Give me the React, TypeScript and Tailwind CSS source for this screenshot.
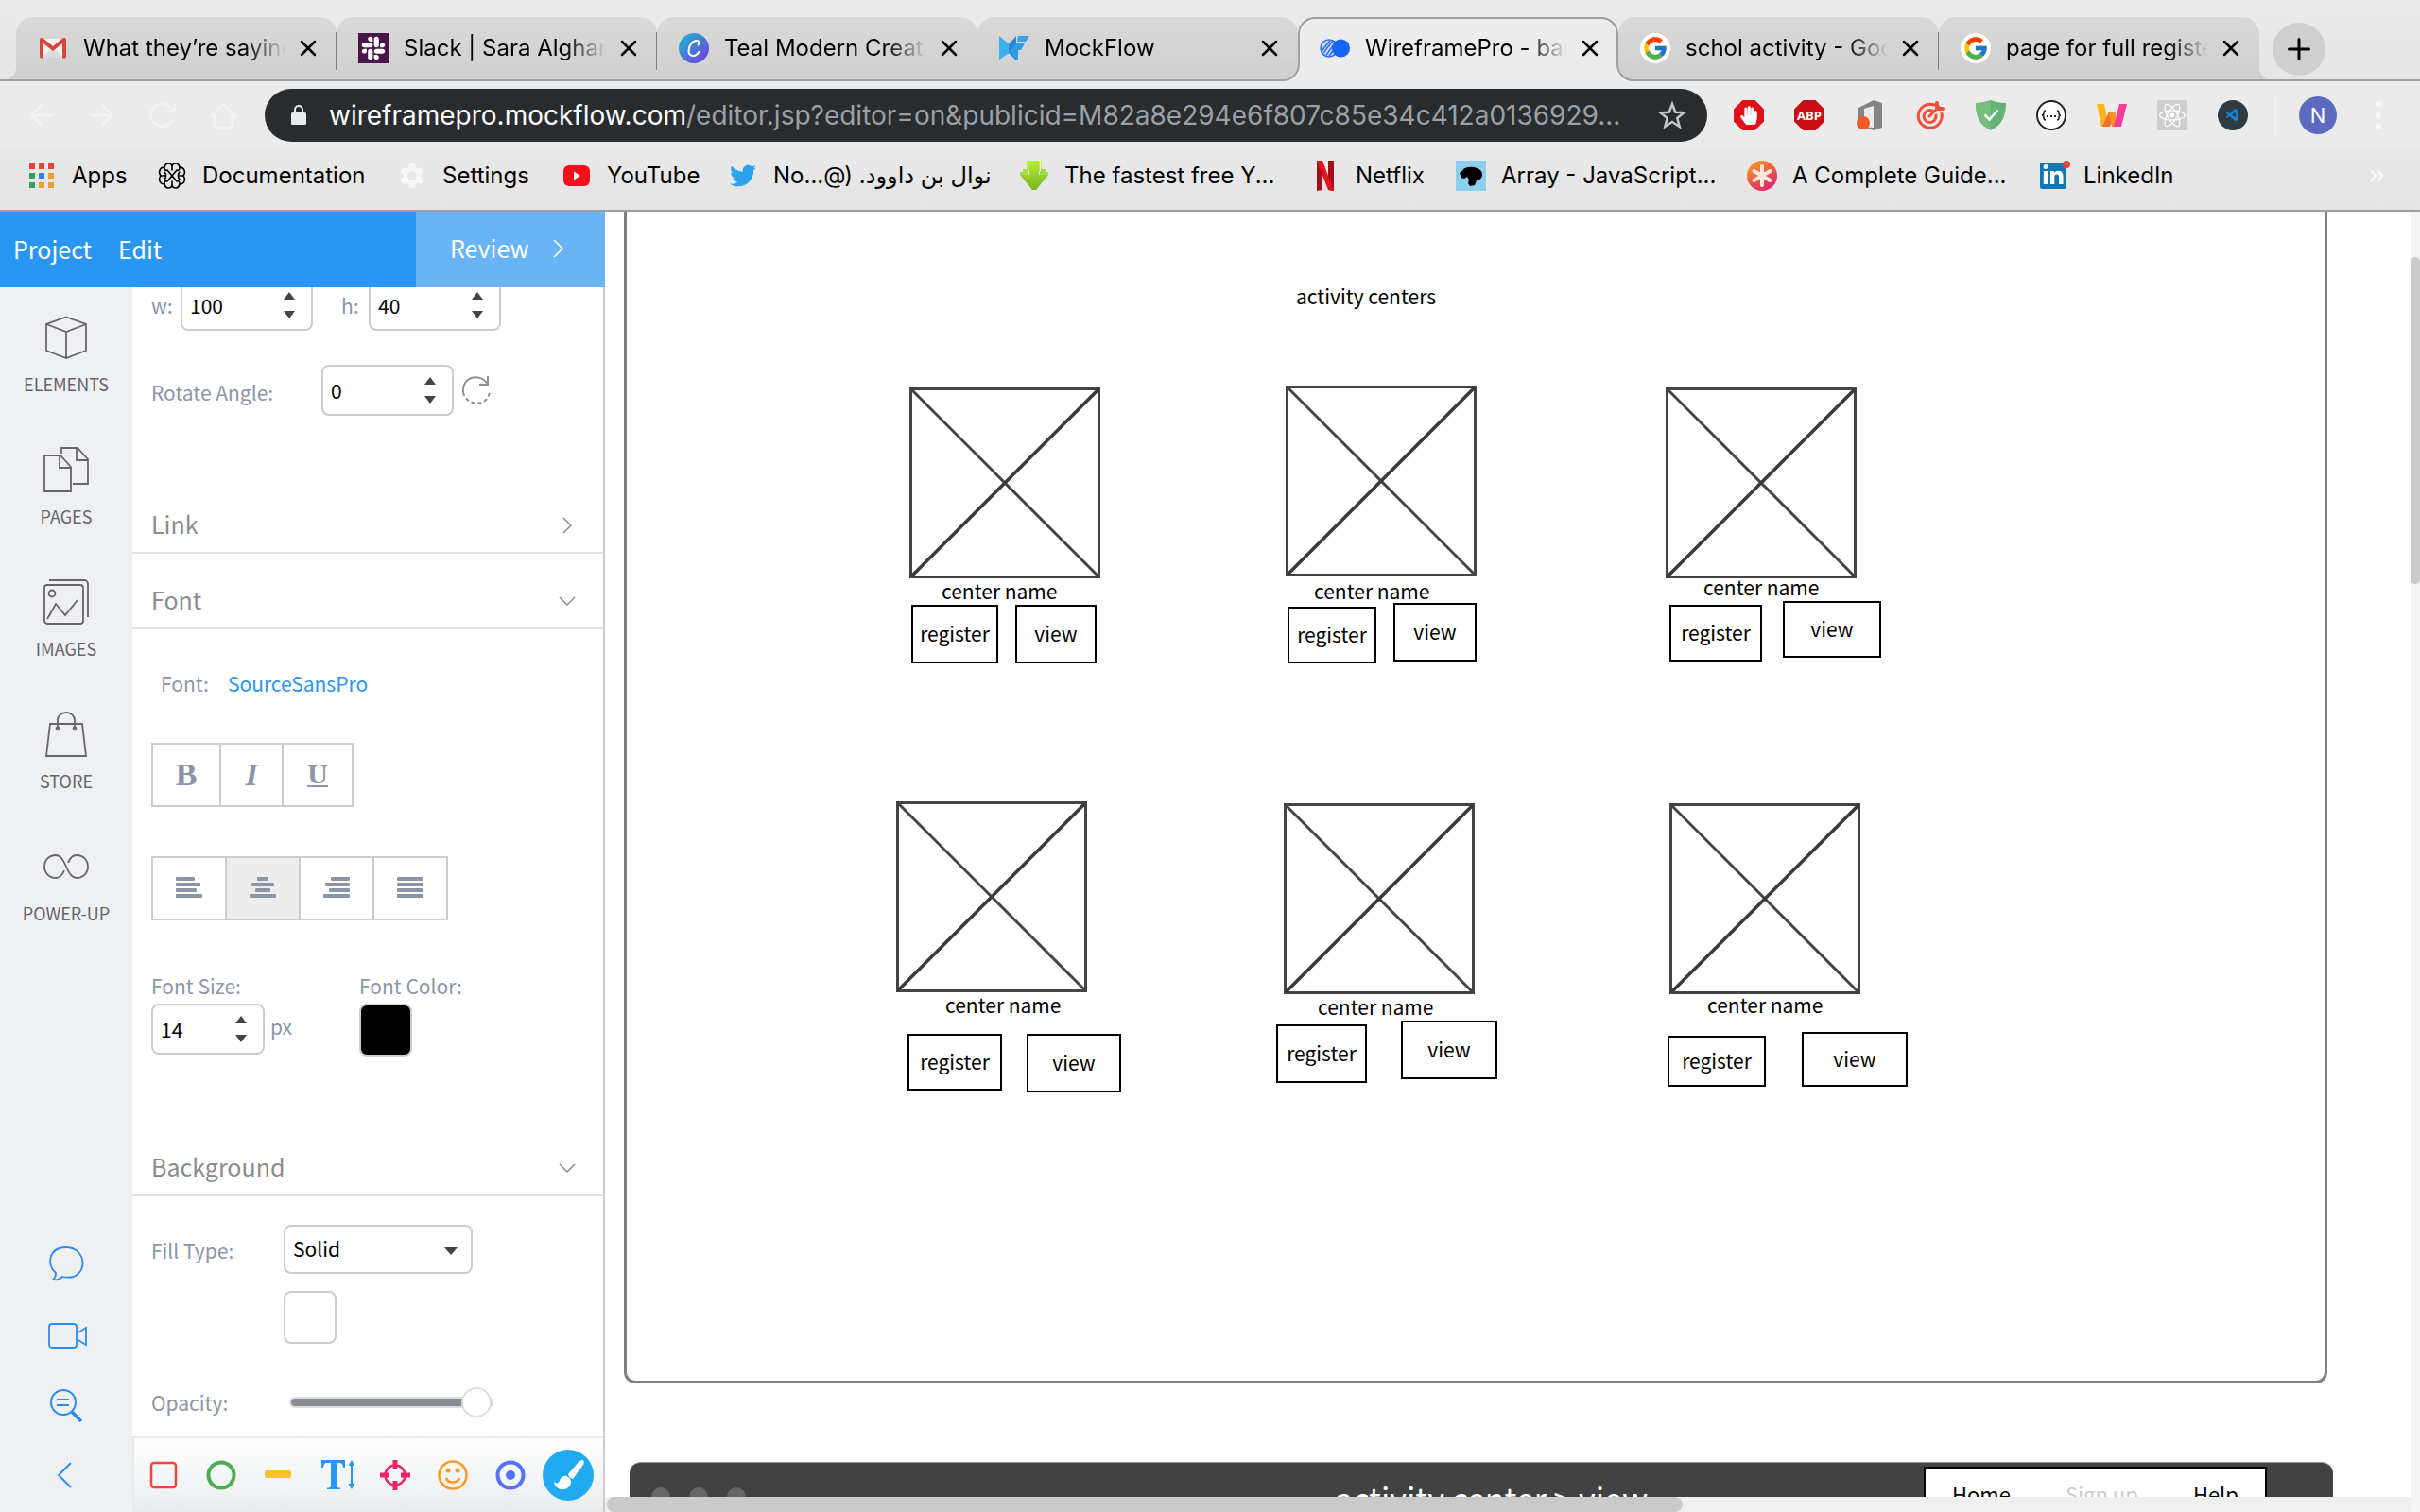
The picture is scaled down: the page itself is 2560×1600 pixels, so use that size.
import type { ReactNode } from "react";
import { FaSlack, FaTwitter, FaReact, FaHandPaper, FaLinkedinIn } from "react-icons/fa";
import { FcGoogle } from "react-icons/fc";
import { VscVscode } from "react-icons/vsc";
import { MdSettings } from "react-icons/md";

/* ---------- browser icons ---------- */

const Gmail = () => (
  <svg viewBox="0 0 32 32" className="size-8">
    <path d="M4 6h24v20H4z" fill="#f2f2f2" />
    <path d="M4 26 16 15l12 11z" fill="#dcdcdc" />
    <path d="M2 7v18a1.500 1.500 0 0 0 1.500 1.500H6V11l10 8 10-8v15.500h2.500A1.500 1.500 0 0 0 30 25V7c0-2-2.500-2.500-4-1.200L16 14 6 5.800C4.500 4.500 2 5 2 7z" fill="#d9453a" />
  </svg>
);

const SlackTile = () => (
  <span className="flex size-8 items-center justify-center bg-[#4a154b] text-white">
    <FaSlack className="size-7" />
  </span>
);

const Canva = () => (
  <svg viewBox="0 0 32 32" className="size-8">
    <defs>
      <linearGradient id="canva" x1="0.1" y1="0.1" x2="0.9" y2="0.9">
        <stop offset="0" stopColor="#1fb1d0" />
        <stop offset="1" stopColor="#7440e0" />
      </linearGradient>
    </defs>
    <circle cx="16" cy="16" r="16" fill="url(#canva)" />
    <path d="M20.500 12.500c1.500-1.500 1.300-4.500-1.500-4.500-4.500 0-8.500 5.500-8.500 10.500 0 3.500 2 5.500 4.700 5.500 2.800 0 4.800-1.600 6-4" fill="none" stroke="#fff" strokeWidth="2" strokeLinecap="round" />
  </svg>
);

const MockFlow = () => (
  <svg viewBox="0 0 32 32" className="size-8">
    <path d="M0 3 11 12v9L0 28z" fill="#3eb0ea" />
    <path d="M10 12 18 3v26l-8-8z" fill="#2688d8" />
    <path d="M20 3h12l-4 6h-9z" fill="#3ba3e8" />
    <path d="M18 11h9l-4 7h-3v11L10 20z" fill="#2f9be6" />
  </svg>
);

const WireframePro = () => (
  <svg viewBox="0 0 32 32" className="size-8">
    <circle cx="10" cy="16" r="9" fill="#c9dafb" stroke="#2f6bf5" strokeWidth="1.500" />
    <path d="M3 18 11 8M4 21 14 8M7 23 16 11M10 24l7-9" stroke="#2f6bf5" strokeWidth="1.500" />
    <circle cx="22.500" cy="16" r="9.500" fill="#1763fb" />
  </svg>
);

const Google = () => (
  <span className="flex size-8 items-center justify-center rounded-full bg-white">
    <FcGoogle className="size-7" />
  </span>
);

const AppsGrid = () => (
  <svg viewBox="0 0 32 32" className="size-8">
    {["#ee4135", "#ee4135", "#ee4135", "#3b9c5b", "#2f85ec", "#eba12b", "#3b9c5b", "#eba12b", "#eba12b"].map((c, i) => (
      <rect key={i} x={3 + (i % 3) * 10} y={3 + Math.floor(i / 3) * 10} width="6" height="6" fill={c} />
    ))}
  </svg>
);

const Knot = () => (
  <svg viewBox="0 0 32 32" className="size-8" fill="none" stroke="#000" strokeWidth="1.600" strokeLinecap="round">
    <path d="M16 5c-2-3-7-3-8 2-5 0-7 5-4 9-3 4-1 9 4 9 1 5 6 5 8 2 2 3 7 3 8-2 5 0 7-5 4-9 3-4 1-9-4-9-1-5-6-5-8-2z" />
    <path d="M11 10l10 12M21 10 11 22M16 5v5M16 22v5M4 16h4M28 16h-4M8 7c0 3 1 4 3 3M24 7c0 3-1 4-3 3M8 25c0-3 1-4 3-3M24 25c0-3-1-4-3-3M8 12c2 2 2 6 0 8M24 12c-2 2-2 6 0 8" />
  </svg>
);

const YouTube = () => (
  <svg viewBox="0 0 32 32" className="size-8">
    <rect x="2" y="5" width="28" height="22" rx="6" fill="#fb0d1b" />
    <path d="M13 11.500v9l7-4.500z" fill="#fff" />
  </svg>
);

const Download = () => (
  <svg viewBox="0 0 32 32" className="size-8">
    <defs>
      <linearGradient id="dl" x1="0" y1="0" x2="0" y2="1">
        <stop offset="0" stopColor="#b7ee35" />
        <stop offset="1" stopColor="#76b522" />
      </linearGradient>
    </defs>
    <path d="M8 0h16v11h-3v4h10L18 31h-4L1 15h10v-4H8z" fill="url(#dl)" />
    <path d="M1 15v-3h3V9h6v6zM31 15v-3h-3V9h-6v6z" fill="#a3dc4a" />
    <path d="M9.500 0v11M22.500 0v11" stroke="#effad2" strokeWidth="1.500" />
  </svg>
);

const Netflix = () => (
  <svg viewBox="0 0 32 32" className="size-8">
    <path d="M7 0h6v31l-6 1zM19 0h6v32l-6-1z" fill="#a50f17" />
    <path d="M7 0h6l12 32-6-1z" fill="#e5121d" />
  </svg>
);

const Bust = () => (
  <svg viewBox="0 0 32 32" className="size-8">
    <path d="M0 0h32v32H0z" fill="#8dcff0" />
    <path d="M4 14c0-2 2-3 3-3 1-3 4-4 7-4 5-1 9 1 12 3 3 3 3 8-1 10l-3 1-2 5-5 1-2-3 1-4-2-3-3 2-4-1 1-2z" fill="#000" />
  </svg>
);

const Asterisk = () => (
  <svg viewBox="0 0 32 32" className="size-8">
    <defs>
      <linearGradient id="ast" x1="0.2" y1="0" x2="0.8" y2="1">
        <stop offset="0" stopColor="#f89a22" />
        <stop offset="1" stopColor="#dd1c75" />
      </linearGradient>
    </defs>
    <circle cx="16" cy="16" r="16" fill="url(#ast)" />
    <path d="M16 6v20M7.500 11l17 10M24.500 11l-17 10" stroke="#fde6dc" strokeWidth="4" strokeLinecap="round" />
  </svg>
);

const LinkedIn = () => (
  <span className="relative flex size-8 items-center justify-center">
    <span className="flex size-7 items-center justify-center rounded-xs bg-[#1277b5] text-white">
      <FaLinkedinIn className="size-6" />
    </span>
    <span className="absolute -right-0.5 top-0 size-2 rounded-full bg-[#e0443e]" />
  </span>
);

const OCT = "M9.500 0h13L32 9.500v13L22.500 32h-13L0 22.500v-13z";

const StopHand = () => (
  <span className="relative flex size-8 items-center justify-center text-white">
    <svg viewBox="0 0 32 32" className="absolute size-8">
      <path d={OCT} fill="#df1119" />
    </svg>
    <FaHandPaper className="relative size-5" />
  </span>
);

const Abp = () => (
  <svg viewBox="0 0 32 32" className="size-8">
    <path d={OCT} fill="#c90d14" />
    <text x="16" y="21" textAnchor="middle" fill="#fff" fontSize="13" fontWeight="700" fontFamily="Open Sans, sans-serif">ABP</text>
  </svg>
);

const Office = () => (
  <svg viewBox="0 0 32 32" className="size-8">
    <path d="M4 8 20 0l9 3v26l-9 3-12-4 12 1V6L10 9v10l-6 3z" fill="#848484" />
    <circle cx="9" cy="24" r="7" fill="#f15a22" />
  </svg>
);

const Target = () => (
  <svg viewBox="0 0 32 32" className="size-8" fill="none" stroke="#f2503b" strokeWidth="3" strokeLinecap="round">
    <path d="M20 5a12.500 12.500 0 1 0 8 9" />
    <path d="M18 11a6.500 6.500 0 1 0 4 5" />
    <path d="M15 17 25 7" />
    <path d="M23 3v6h6" strokeWidth="4" />
  </svg>
);

const Shield = () => (
  <svg viewBox="0 0 32 32" className="size-8">
    <path d="M16 0c5 2 10 3 16 3 0 14-4 23-16 29C4 26 0 17 0 3c6 0 11-1 16-3z" fill="#67b279" />
    <path d="M16 0v32C4 26 0 17 0 3c6 0 11-1 16-3z" fill="#74bd7a" />
    <path d="m9.500 15.500 5 5 9-10" fill="none" stroke="#fff" strokeWidth="2.500" />
  </svg>
);

const Json = () => (
  <svg viewBox="0 0 32 32" className="size-8">
    <circle cx="16" cy="16" r="15" fill="#fff" stroke="#222" strokeWidth="2" />
    <path d="M10 11c-2 0-2 1-2 2.500S8 16 6 16c2 0 2 1 2 2.500S8 21 10 21M22 11c2 0 2 1 2 2.500s0 2.500 2 2.500c-2 0-2 1-2 2.500s0 2.500-2 2.500" fill="none" stroke="#222" strokeWidth="1.500" />
    <path d="M11 16h2v2h-2zM15 16h2v2h-2zM19 16h2v2h-2z" fill="#222" />
  </svg>
);

const Wappalyzer = () => (
  <svg viewBox="0 0 32 32" className="size-8">
    <path d="M0 4h8l5 24H5z" fill="#fcb61a" />
    <path d="M13 12h7l-6 16H6z" fill="#f7702e" />
    <path d="M12 12h7l4 16h-7z" fill="#f99220" />
    <path d="M24 4h8l-6 24h-8z" fill="#f93b9b" />
  </svg>
);

const ReactTile = () => (
  <span className="flex size-8 items-center justify-center rounded-xs bg-[#cecece] text-white">
    <FaReact className="size-7" />
  </span>
);

const Code = () => (
  <span className="flex size-8 items-center justify-center rounded-full bg-[#2f3b43] text-[#1583cf]">
    <VscVscode className="size-4" />
  </span>
);

/* ---------- browser chrome ---------- */

const TABS: { icon: ReactNode; title: string; active?: boolean; sep?: boolean }[] = [
  { icon: <Gmail />, title: "What they’re saying", sep: true },
  { icon: <SlackTile />, title: "Slack | Sara Algham", sep: true },
  { icon: <Canva />, title: "Teal Modern Creativ", sep: true },
  { icon: <MockFlow />, title: "MockFlow" },
  { icon: <WireframePro />, title: "WireframePro - bar", active: true },
  { icon: <Google />, title: "schol activity - Goog", sep: true },
  { icon: <Google />, title: "page for full registe" },
];

function CloseIcon() {
  return (
    <svg viewBox="0 0 20 20" className="size-5" stroke="#000" strokeWidth="2.500" strokeLinecap="round">
      <path d="M3 3l14 14M17 3 3 17" />
    </svg>
  );
}

function TabStrip() {
  return (
    <div className="flex h-[86px] items-end bg-linear-to-b from-[#ebebeb] to-[#e5e5e5] pl-[17px] shadow-[inset_0_-2px_0_#9f9f9f]">
      {TABS.map((t, i) => (
        <div
          key={t.title}
          className={
            t.active
              ? "relative z-10 flex h-[68px] w-[339px] items-center rounded-t-[18px] border-2 border-b-0 border-[#9f9f9f] bg-[#ececec] pb-1 pl-[21px]"
              : "relative mb-0.5 flex h-[66px] w-[339px] items-center rounded-t-[18px] bg-linear-to-b from-[#d9d9d9] to-[#cfcfcf] pl-[23px]"
          }
        >
          {i === 0 && (
            <span className="absolute bottom-0 -left-3 size-3 bg-[#cfcfcf]">
              <span className="block size-full rounded-br-xl bg-[#e6e6e6]" />
            </span>
          )}
          {i === TABS.length - 1 && (
            <span className="absolute -right-3 bottom-0 size-3 bg-[#cfcfcf]">
              <span className="block size-full rounded-bl-xl bg-[#e6e6e6]" />
            </span>
          )}
          {t.active && (
            <>
              <span className="absolute -left-5 bottom-0 size-5 bg-[#ececec]">
                <span className="block size-full rounded-br-[18px] border-r-2 border-b-2 border-[#9f9f9f] bg-[#d0d0d0]" />
              </span>
              <span className="absolute -right-5 bottom-0 size-5 bg-[#ececec]">
                <span className="block size-full rounded-bl-[18px] border-b-2 border-l-2 border-[#9f9f9f] bg-[#d0d0d0]" />
              </span>
            </>
          )}
          {t.icon}
          <span className="ml-4 w-[214px] overflow-hidden text-[24px] leading-8 whitespace-nowrap text-black [mask-image:linear-gradient(to_right,#000_170px,transparent)]">
            {t.title}
          </span>
          <button aria-label={`Close ${t.title}`} className="ml-3.5">
            <CloseIcon />
          </button>
          {t.sep && <span className="absolute top-4 -right-px h-10 w-0.5 bg-[#808080]" />}
        </div>
      ))}
      <button aria-label="New tab" className="mb-1.5 ml-3.5 flex size-14 items-center justify-center rounded-full bg-[#cfcfcf]">
        <svg viewBox="0 0 24 24" className="size-6" stroke="#000" strokeWidth="3" strokeLinecap="round">
          <path d="M12 1.500v21M1.500 12h21" />
        </svg>
      </button>
    </div>
  );
}

const NAV: [string, string][] = [
  ["Back", "M28 16H5M16 5 5 16l11 11"],
  ["Forward", "M4 16h23M16 5l11 11-11 11"],
  ["Reload", "M27 20a12 12 0 1 1-2-12l3 3M29 3v9h-9"],
  ["Home", "M3 17 16 4l13 13h-4v12H7V17z"],
];

const EXTENSIONS: [string, ReactNode][] = [
  ["AdBlock", <StopHand />],
  ["Adblock Plus", <Abp />],
  ["Office", <Office />],
  ["Goals", <Target />],
  ["AdGuard", <Shield />],
  ["JSON viewer", <Json />],
  ["Colors", <Wappalyzer />],
  ["React tools", <ReactTile />],
  ["Code", <Code />],
];

function Toolbar() {
  return (
    <div className="flex h-[72px] items-center bg-[#ebebeb] pl-7">
      <div className="flex gap-8">
        {NAV.map(([name, d]) => (
          <button key={name} aria-label={name}>
            <svg viewBox="0 0 32 32" className="size-8" fill="none" stroke="#f1f2f3" strokeWidth="2.500">
              <path d={d} />
            </svg>
          </button>
        ))}
      </div>
      <div className="ml-7 flex h-14 min-w-0 flex-1 items-center rounded-full bg-[#282c2f] pr-[21px] pl-[26px]">
        <svg viewBox="0 0 20 24" className="h-6 w-5">
          <rect x="2" y="9" width="16" height="13" rx="1.500" fill="#e8eaed" />
          <path d="M6 10V6a4 4 0 0 1 8 0v4" fill="none" stroke="#e8eaed" strokeWidth="2" />
        </svg>
        <div className="ml-[22px] min-w-0 flex-1 overflow-hidden text-[28px] leading-9 whitespace-nowrap text-[#9aa0a6]">
          <span className="text-white">wireframepro.mockflow.com</span>
          /editor.jsp?editor=on&amp;publicid=M82a8e294e6f807c85e34c412a0136929...
        </div>
        <button aria-label="Bookmark this page">
          <svg viewBox="0 0 32 32" className="size-8" fill="none" stroke="#c4c7ca" strokeWidth="2.500">
            <path d="m16 4 3.300 8.700 9.200.5-7.200 5.800 2.400 9L16 23l-7.700 5 2.400-9-7.200-5.800 9.200-.5z" />
          </svg>
        </button>
      </div>
      <div className="ml-7 flex gap-8">
        {EXTENSIONS.map(([name, icon]) => (
          <button key={name} aria-label={name}>
            {icon}
          </button>
        ))}
      </div>
      <span className="ml-7 h-12 w-0.5 bg-[#efefef]" />
      <button className="ml-6 size-10 rounded-full bg-[#5c6bc0] text-[22px] leading-10 text-white">N</button>
      <button aria-label="Menu" className="mr-10 ml-10 flex w-2 flex-col items-center gap-1.5">
        <span className="size-1.5 rounded-full bg-[#f6f7f8]" />
        <span className="size-1.5 rounded-full bg-[#f6f7f8]" />
        <span className="size-1.5 rounded-full bg-[#f6f7f8]" />
      </button>
    </div>
  );
}

const BOOKMARKS: { icon: ReactNode; label: string; w: string; rtl?: boolean }[] = [
  { icon: <AppsGrid />, label: "Apps", w: "w-[138px]" },
  { icon: <Knot />, label: "Documentation", w: "w-[254px]" },
  { icon: <MdSettings className="size-8 text-[#f6f7f8]" />, label: "Settings", w: "w-[174px]" },
  { icon: <YouTube />, label: "YouTube", w: "w-[176px]" },
  { icon: <FaTwitter className="size-8 px-0.5 text-[#2aa3ef]" />, label: "نوال بن داوود. (@...No", w: "w-[308px]", rtl: true },
  { icon: <Download />, label: "The fastest free Y...", w: "w-[308px]" },
  { icon: <Netflix />, label: "Netflix", w: "w-[154px]" },
  { icon: <Bust />, label: "Array - JavaScript...", w: "w-[308px]" },
  { icon: <Asterisk />, label: "A Complete Guide...", w: "w-[308px]" },
  { icon: <LinkedIn />, label: "LinkedIn", w: "w-[154px]" },
];

function Bookmarks() {
  return (
    <nav className="flex h-[66px] items-start border-b-2 border-[#9f9f9f] bg-linear-to-b from-[#e9e9e9] to-[#e4e4e4] pl-7">
      {BOOKMARKS.map((b) => (
        <a key={b.label} href="#" className={`flex h-14 shrink-0 items-center gap-4 ${b.w}`}>
          {b.icon}
          <span dir={b.rtl ? "rtl" : "ltr"} className="text-[24px] leading-8 whitespace-nowrap text-black">
            {b.label}
          </span>
        </a>
      ))}
      <button aria-label="More bookmarks" className="mr-[38px] ml-auto h-14">
        <svg viewBox="0 0 16 16" className="size-4" fill="none" stroke="#f8f9fa" strokeWidth="2">
          <path d="m2 2 5 6-5 6M9 2l5 6-5 6" />
        </svg>
      </button>
    </nav>
  );
}

/* ---------- editor side rail ---------- */

const RAIL: [string, ReactNode][] = [
  ["ELEMENTS", <path d="M24 2.500 45 10v28l-21 8L3 38V10zM3 10l21 8 21-8M24 18v28" />],
  ["PAGES", <path d="M1 9h17l11 12v26H1zM17 9v13h12M19 7V1h17l11 12v26H31M35 1v13h12" />],
  ["IMAGES", (
    <>
      <rect x="1" y="6" width="41" height="41" rx="3" />
      <path d="M6 1h37a4 4 0 0 1 4 4v35M4 42l9-16 10 12 13-16" />
      <circle cx="9" cy="15" r="3.500" />
    </>
  )],
  ["STORE", (
    <>
      <path d="M7 13h34l4 34H3zM15 18V9a9 8 0 0 1 18 0v9" />
      <circle cx="15" cy="18" r="1.500" />
      <circle cx="33" cy="18" r="1.500" />
    </>
  )],
  ["POWER-UP", <path d="M22 28c-2 5-5 8-9 8-7 0-12-5-12-12s5-12 12-12c11 0 11 24 22 24 7 0 12-5 12-12s-5-12-12-12c-4 0-7 3-9 8" />],
];

function Rail() {
  return (
    <nav className="flex w-[140px] shrink-0 flex-col bg-[#eff0f4]">
      {RAIL.map(([name, art]) => (
        <button key={name} className="flex h-[140px] flex-col items-center pt-[29px] text-[18px] leading-7 text-[#666]">
          <svg viewBox="0 0 48 48" className="size-12" fill="none" stroke="#666" strokeWidth="1.800">
            {art}
          </svg>
          <span className="mt-[11px]">{name}</span>
        </button>
      ))}
      <div className="mt-auto flex flex-col items-center gap-[34px] pb-[19px]">
        <button aria-label="Comments">
          <svg viewBox="0 3 40 40" className="size-10" fill="none" stroke="#2b8cf3" strokeWidth="1.800">
            <path d="M9 31C-1 23 1 4 20 4s24 24 8 31c-5 1-8 1-12 0-3 3-6 4-10 3 3-2 3-4 3-7z" />
          </svg>
        </button>
        <button aria-label="Video">
          <svg viewBox="0 0 40 40" className="size-10 overflow-visible" fill="none" stroke="#2b8cf3" strokeWidth="1.800">
            <rect x="2" y="8" width="29" height="25" rx="3" />
            <path d="m31 18 10-6v18l-10-6" />
          </svg>
        </button>
        <button aria-label="Search">
          <svg viewBox="0 0 40 40" className="size-10" fill="none" stroke="#2b8cf3" strokeWidth="2">
            <circle cx="17" cy="17" r="13" />
            <path d="M10 14h13M10 20h13" />
            <path d="m26 27 10 10" strokeWidth="3.500" />
          </svg>
        </button>
        <button aria-label="Collapse">
          <svg viewBox="0 0 40 40" className="size-10" fill="none" stroke="#2b8cf3" strokeWidth="2">
            <path d="M25 7 12 20l13 13" />
          </svg>
        </button>
      </div>
    </nav>
  );
}

/* ---------- property panel ---------- */

function NumberBox({ id, value, w }: { id: string; value: string; w: string }) {
  return (
    <div className={`flex h-[54px] items-center rounded-lg border-2 border-[#ccc] bg-white pl-2 ${w}`}>
      <input id={id} defaultValue={value} className="h-8 w-0 min-w-0 flex-1 text-[21px] leading-8 text-black outline-none" />
      <div className="mr-4 flex w-3.5 flex-col gap-3">
        <button aria-label="Increase">
          <svg viewBox="0 0 14 8" className="block h-2 w-3.5">
            <path d="M7 0l6 8H1z" fill="#444" />
          </svg>
        </button>
        <button aria-label="Decrease">
          <svg viewBox="0 0 14 8" className="block h-2 w-3.5">
            <path d="M7 8l6-8H1z" fill="#444" />
          </svg>
        </button>
      </div>
    </div>
  );
}

function SectionHead({ title, open, mt }: { title: string; open?: boolean; mt: string }) {
  return (
    <button className={`flex h-20 w-full items-center justify-between border-b-2 border-[#e2e2e2] pt-5 pr-[28px] pl-5 text-[25px] leading-9 text-[#8c8c8c] ${mt}`}>
      <span className="pb-0.5">{title}</span>
      <svg viewBox="0 0 20 20" className="mt-0.5 size-5" fill="none" stroke="#8c8c8c" strokeWidth="1.500">
        <path d={open ? "m2 6 8 8 8-8" : "m6 2 8 8-8 8"} />
      </svg>
    </button>
  );
}

const ALIGN: [string, [number, number][]][] = [
  ["Align left", [[0, 20], [0, 26], [0, 22], [0, 28]]],
  ["Align center", [[8, 12], [2, 24], [6, 16], [0, 28]]],
  ["Align right", [[8, 20], [2, 26], [6, 22], [0, 28]]],
  ["Justify", [[0, 28], [0, 28], [0, 28], [0, 28]]],
];

const TOOLS: [string, ReactNode][] = [
  ["Rectangle", <rect x="5" y="5" width="26" height="26" rx="3" fill="none" stroke="#f4433c" strokeWidth="2.500" />],
  ["Circle", <circle cx="18" cy="18" r="13.500" fill="none" stroke="#4caf50" strokeWidth="4" />],
  ["Line", <rect x="3" y="13" width="28" height="8" rx="2" fill="#fdbf2d" />],
  ["Text", (
    <>
      <path d="M2 2h25v8h-2c-.5-4-1.500-5-4-5h-3v24c0 2 1 2.500 4 2.500V33H8v-1.500c3 0 4-.5 4-2.500V5H8C5.500 5 4.500 6 4 10H2z" fill="#2b96f1" />
      <path d="M34 5v26" stroke="#2b96f1" strokeWidth="2" />
      <path d="M34 2l3.500 6h-7zM34 33l3.500-6h-7z" fill="#2b96f1" />
    </>
  )],
  ["Hotspot", (
    <>
      <circle cx="18" cy="18" r="10.500" fill="none" stroke="#ee2460" strokeWidth="2.500" />
      <path d="M18 2v10M18 24v10M2 18h10M24 18h10" stroke="#ee2460" strokeWidth="5" />
    </>
  )],
  ["Emoji", (
    <>
      <circle cx="18" cy="18" r="14.500" fill="none" stroke="#fb9a28" strokeWidth="2.500" />
      <circle cx="13" cy="13" r="2.500" fill="#fb9a28" />
      <circle cx="23" cy="13" r="2.500" fill="#fb9a28" />
      <path d="M11 21c2 6 12 6 14 0" fill="none" stroke="#fb9a28" strokeWidth="2.500" />
    </>
  )],
  ["Marker", (
    <>
      <circle cx="18" cy="18" r="13.500" fill="none" stroke="#5472fb" strokeWidth="4" />
      <circle cx="18" cy="18" r="5" fill="#5472fb" />
    </>
  )],
];

const LABEL = "text-[21px] leading-8 text-[#8c95a8]";

function PropertyPanel() {
  return (
    <section className="flex min-w-0 flex-1 flex-col border-r-2 border-[#ccc] bg-white">
      <div className="min-h-0 flex-1 overflow-hidden">
        <div className="-mt-2 flex items-center pl-5">
          <label htmlFor="w" className={`w-[31px] ${LABEL}`}>w:</label>
          <NumberBox id="w" value="100" w="w-[140px]" />
          <label htmlFor="h" className={`ml-[30px] w-[29px] ${LABEL}`}>h:</label>
          <NumberBox id="h" value="40" w="w-[140px]" />
        </div>
        <div className="mt-9 flex items-center pl-5">
          <label htmlFor="angle" className={`w-[180px] pt-1 ${LABEL}`}>Rotate Angle:</label>
          <NumberBox id="angle" value="0" w="w-[140px]" />
          <button aria-label="Rotate" className="ml-2">
            <svg viewBox="0 0 32 32" className="size-8" fill="none" stroke="#8f8f8f" strokeWidth="2">
              <path d="M2 18C0 2 20-4 28 10M28 1v9h-9" />
              <path d="M2 18c3 16 28 16 28-2" strokeDasharray="4 3" />
            </svg>
          </button>
        </div>
        <SectionHead title="Link" mt="mt-[66px]" />
        <SectionHead title="Font" open mt="mt-0" />
        <div className="mt-[41px] flex gap-5 pl-[30px]">
          <span className={LABEL}>Font:</span>
          <a href="#" className="text-[21px] leading-8 text-[#2b96f1]">SourceSansPro</a>
        </div>
        <div className="mt-[47px] ml-5 flex h-[68px] w-[214px] divide-x-2 divide-[#ccc] border-2 border-[#ccc] text-[#8c95a8] [font-family:'Liberation_Serif',serif]">
          <button aria-label="Bold" className="w-[72px] text-[34px] leading-9 font-bold">B</button>
          <button aria-label="Italic" className="w-[66px] text-[34px] leading-9 font-bold italic">I</button>
          <button aria-label="Underline" className="flex flex-1 items-center justify-center">
            <span className="border-b-2 border-[#8c95a8] text-[30px] leading-6 font-bold">U</span>
          </button>
        </div>
        <div className="mt-[52px] ml-5 flex h-[68px] w-[314px] divide-x-2 divide-[#ccc] border-2 border-[#ccc]">
          {ALIGN.map(([name, rows], i) => (
            <button key={name} aria-label={name} className={`flex flex-1 items-center justify-center ${i === 1 ? "bg-[#ededed]" : ""}`}>
              <svg viewBox="0 0 28 24" className="h-6 w-7">
                {rows.map(([x, w], r) => (
                  <rect key={r} x={x} y={r * 6} width={w} height="4" rx="1" fill="#8c95a8" />
                ))}
              </svg>
            </button>
          ))}
        </div>
        <div className="mt-[53px] flex pl-5">
          <div className="w-[220px]">
            <label htmlFor="size" className={`block ${LABEL}`}>Font Size:</label>
            <div className="mt-[3px] flex items-center gap-1.5">
              <NumberBox id="size" value="14" w="w-[120px]" />
              <span className={`pb-1.5 ${LABEL}`}>px</span>
            </div>
          </div>
          <div>
            <span className={`block ${LABEL}`}>Font Color:</span>
            <button aria-label="Font color" className="mt-[3px] block size-14 rounded-lg border-2 border-[#ccc] bg-black" />
          </div>
        </div>
        <SectionHead title="Background" open mt="mt-[68px]" />
        <div className="mt-[30px] flex items-center pl-5">
          <label htmlFor="fill" className={`w-[140px] pt-0.5 ${LABEL}`}>Fill Type:</label>
          <div className="relative">
            <select id="fill" className="h-[52px] w-[200px] appearance-none rounded-lg border-2 border-[#ccc] bg-white pb-0.5 pl-2 text-[21px] leading-8 text-black">
              <option>Solid</option>
            </select>
            <svg viewBox="0 0 14 8" className="pointer-events-none absolute top-6 right-4 h-2 w-3.5">
              <path d="M7 8l7-8H0z" fill="#444" />
            </svg>
          </div>
        </div>
        <button aria-label="Fill color" className="mt-[18px] ml-[160px] block size-14 rounded-lg border-2 border-[#ccc] bg-white" />
        <div className="mt-[46px] flex items-center pl-5">
          <label htmlFor="opacity" className={`w-[146px] ${LABEL}`}>Opacity:</label>
          <input
            id="opacity"
            type="range"
            defaultValue={100}
            className="h-8 w-[216px] appearance-none bg-transparent [&::-webkit-slider-runnable-track]:h-3 [&::-webkit-slider-runnable-track]:rounded-full [&::-webkit-slider-runnable-track]:border-2 [&::-webkit-slider-runnable-track]:border-[#ddd] [&::-webkit-slider-runnable-track]:bg-[#888b94] [&::-webkit-slider-thumb]:-mt-3 [&::-webkit-slider-thumb]:size-8 [&::-webkit-slider-thumb]:appearance-none [&::-webkit-slider-thumb]:rounded-full [&::-webkit-slider-thumb]:border-2 [&::-webkit-slider-thumb]:border-[#ddd] [&::-webkit-slider-thumb]:bg-white"
          />
        </div>
      </div>
      <div className="grid h-20 shrink-0 grid-cols-8 items-center border-t-2 border-l-2 border-[#e8eaec] bg-linear-to-b from-white to-[#e9ecee] pr-1.5">
        {TOOLS.map(([name, art]) => (
          <button key={name} aria-label={name} className="flex justify-center">
            <svg viewBox="0 0 36 36" className="size-9 overflow-visible">{art}</svg>
          </button>
        ))}
        <button aria-label="Style" className="flex size-[54px] items-center justify-center justify-self-center rounded-full bg-[#20aaf1]">
          <svg viewBox="0 0 36 36" className="size-9" fill="#fff">
            <path d="M33 2c2 0 2 3 1 5L23 22c-2 0-5-3-5-5L29 4c1-1 3-2 4-2z" />
            <path d="M16 19c3 1 5 3 5 6 0 6-6 9-11 8-4-1-7-5-7-8 2 2 5 2 6-1 1-4 4-6 7-5z" />
          </svg>
        </button>
      </div>
    </section>
  );
}

/* ---------- wireframe canvas ---------- */

const IMAGES = [
  "left-[322px] top-[186px]",
  "left-[720px] top-[184px]",
  "left-[1122px] top-[186px]",
  "left-[308px] top-[624px]",
  "left-[718px] top-[626px]",
  "left-[1126px] top-[626px]",
];

const NAMES = [
  "left-[356px] top-[385px]",
  "left-[750px] top-[385px]",
  "left-[1162px] top-[381px]",
  "left-[360px] top-[823px]",
  "left-[754px] top-[825px]",
  "left-[1166px] top-[823px]",
];

const BUTTONS: [string, string][] = [
  ["register", "left-[324px] top-[416px] w-[92px] h-[62px]"],
  ["view", "left-[434px] top-[416px] w-[86px] h-[62px]"],
  ["register", "left-[722px] top-[418px] w-[94px] h-[60px]"],
  ["view", "left-[834px] top-[414px] w-[88px] h-[62px]"],
  ["register", "left-[1126px] top-[416px] w-[98px] h-[60px]"],
  ["view", "left-[1246px] top-[412px] w-[104px] h-[60px]"],
  ["register", "left-[320px] top-[870px] w-[100px] h-[60px]"],
  ["view", "left-[446px] top-[870px] w-[100px] h-[62px]"],
  ["register", "left-[710px] top-[860px] w-[96px] h-[62px]"],
  ["view", "left-[842px] top-[856px] w-[102px] h-[62px]"],
  ["register", "left-[1124px] top-[872px] w-[104px] h-[54px]"],
  ["view", "left-[1266px] top-[868px] w-[112px] h-[58px]"],
];

function Canvas() {
  return (
    <main className="flex min-w-0 flex-1">
      <div className="flex min-w-0 flex-1 flex-col">
        <div className="relative min-h-0 flex-1 overflow-hidden bg-white text-[21px] leading-8 text-black">
          <div className="absolute -top-4 left-5 h-[1256px] w-[1802px] rounded-xl border-3 border-[#808080]" />
          <h1 className="absolute top-[73px] left-[731px]">activity centers</h1>
          {IMAGES.map((pos) => (
            <svg key={pos} viewBox="0 0 202 202" className={`absolute size-[202px] ${pos}`} fill="none" stroke="#444">
              <rect x="1.500" y="1.500" width="199" height="199" strokeWidth="3" />
              <path d="M2 2l198 198" strokeWidth="3" />
              <path d="M200 2 2 200" strokeWidth="3.500" stroke="#3a3a3a" />
            </svg>
          ))}
          {NAMES.map((pos) => (
            <span key={pos} className={`absolute ${pos}`}>center name</span>
          ))}
          {BUTTONS.map(([label, box]) => (
            <button key={box} className={`absolute border-2 border-black bg-white pb-0.5 text-center ${box}`}>
              {label}
            </button>
          ))}
          <div className="absolute top-[1323px] left-[26px] h-40 w-[1802px] rounded-t-xl border-t border-[#999] bg-[#424242]">
            <div className="absolute top-[26px] left-[23px] flex gap-5">
              <span className="size-5 rounded-full bg-[#666]" />
              <span className="size-5 rounded-full bg-[#666]" />
              <span className="size-5 rounded-full bg-[#666]" />
            </div>
            <h2 className="absolute top-[14px] left-[746px] text-[34px] leading-[48px] whitespace-nowrap text-white">
              activity center &gt; view
            </h2>
            <nav className="absolute top-1 left-[1369px] flex h-20 w-[363px] justify-between border-2 border-black bg-white px-7 pt-2.5 text-[22px]">
              <a href="#">Home</a>
              <a href="#" className="text-[#ccc]">Sign up</a>
              <a href="#">Help</a>
            </nav>
          </div>
        </div>
        <div className="h-4 shrink-0 bg-[#efefef] pl-0.5">
          <div className="h-4 w-[1138px] rounded-full bg-[#cacaca]" />
        </div>
      </div>
      <div className="w-2.5 shrink-0 bg-[#f4f4f4] pt-12">
        <div className="h-[346px] rounded-full bg-[#cacaca]" />
      </div>
    </main>
  );
}

export default function App() {
  return (
    <div className="flex h-screen flex-col overflow-hidden bg-white [font-family:Inter,'DejaVu_Sans',sans-serif]">
      <header className="shrink-0">
        <TabStrip />
        <Toolbar />
        <Bookmarks />
      </header>
      <div className="flex min-h-0 flex-1 [font-family:'Noto_Sans_CJK_SC',sans-serif]">
        <aside className="flex w-[640px] shrink-0 flex-col">
          <div className="flex h-20 shrink-0 items-center bg-[#2b96f1] pl-3.5 text-[25px] leading-9 text-white">
            <button className="pb-0.5">Project</button>
            <button className="ml-7 pb-0.5">Edit</button>
            <button className="ml-auto flex h-20 w-[200px] items-center bg-[#68b4f5] pb-1 pl-9">
              Review
              <svg viewBox="0 0 20 20" className="mt-0.5 ml-5 size-5" fill="none" stroke="#fff" strokeWidth="1.500">
                <path d="m6 1 9 9-9 9" />
              </svg>
            </button>
          </div>
          <div className="flex min-h-0 flex-1">
            <Rail />
            <PropertyPanel />
          </div>
        </aside>
        <Canvas />
      </div>
    </div>
  );
}
